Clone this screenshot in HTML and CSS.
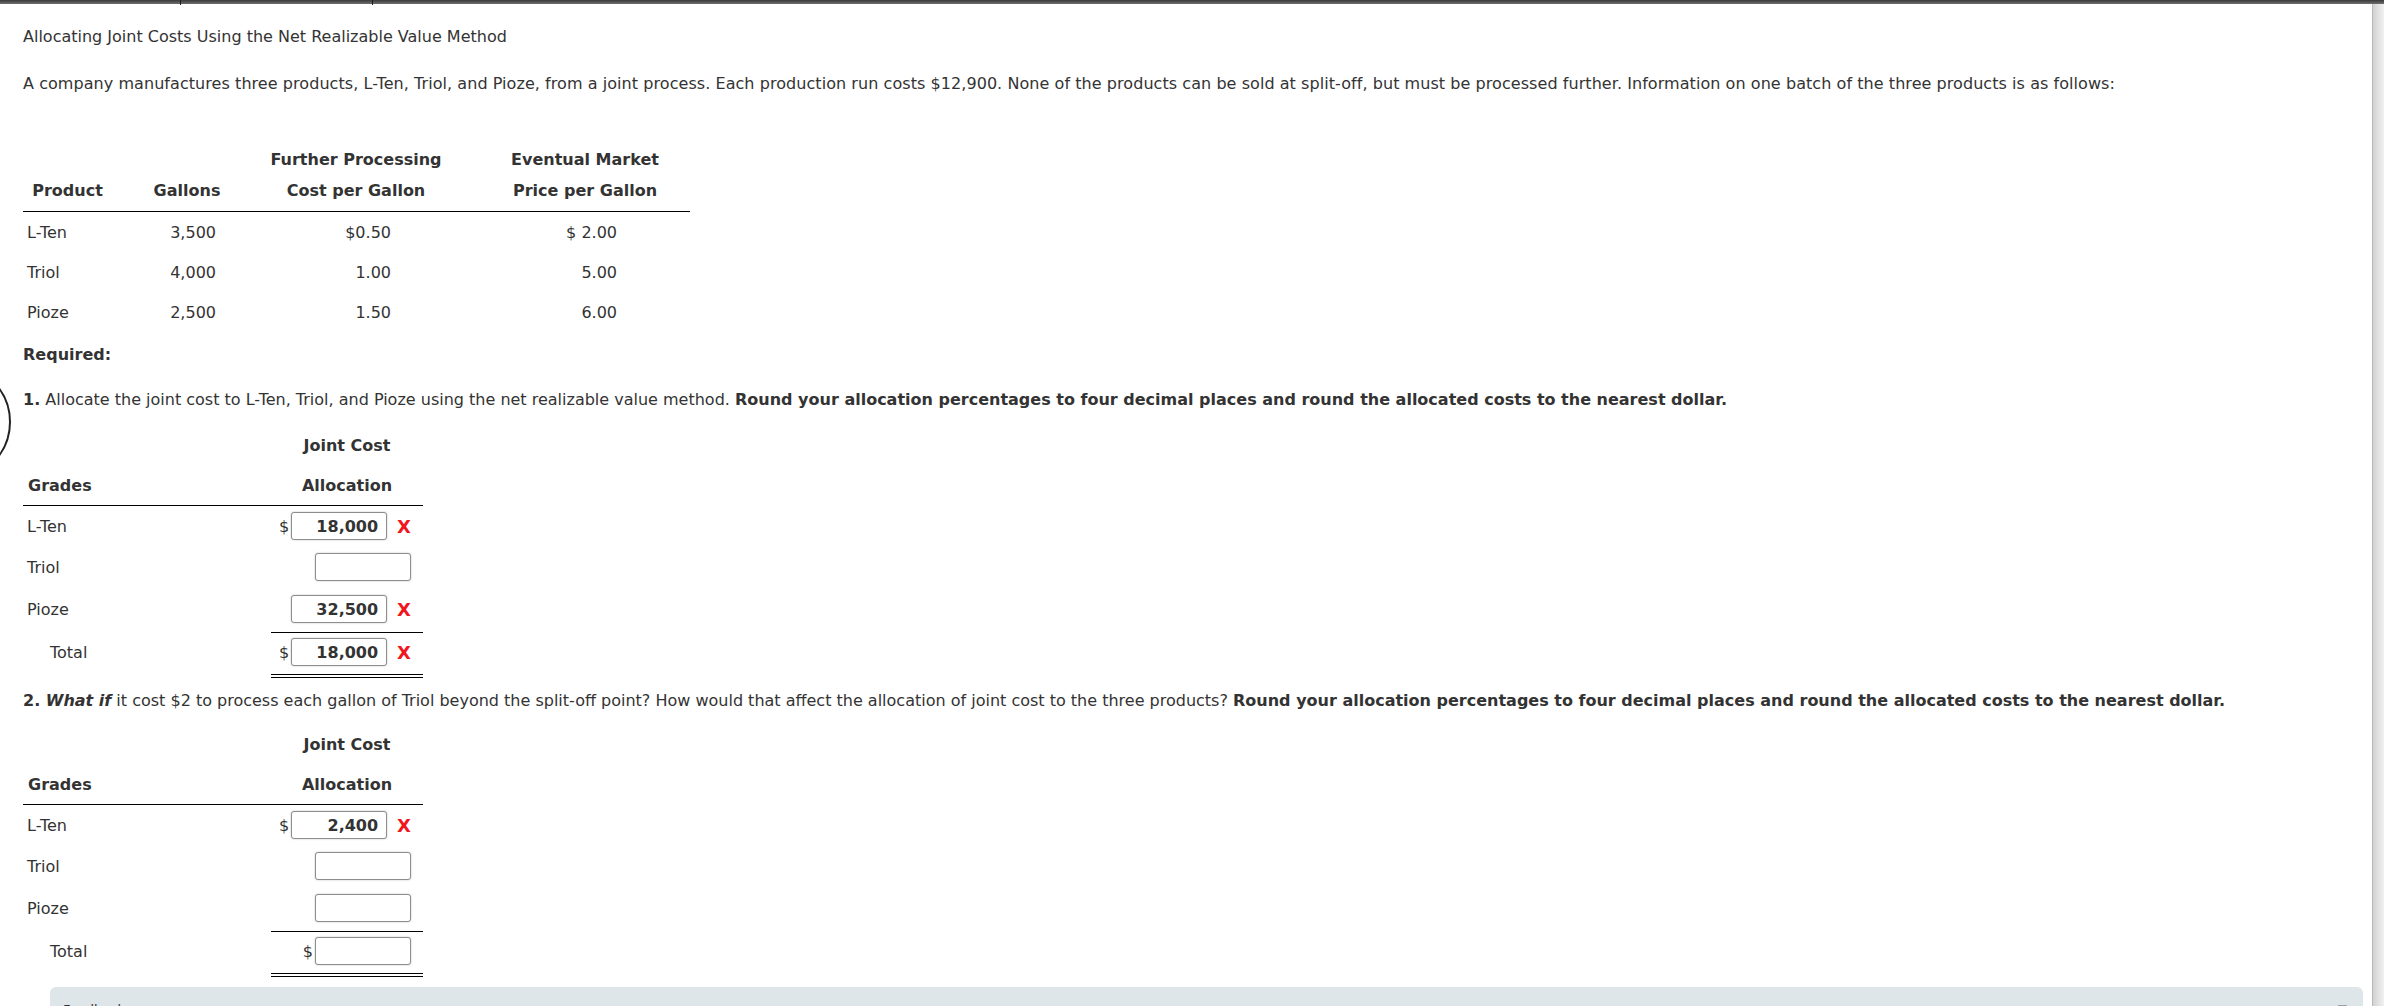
FILE: index.html
```html
<!DOCTYPE html>
<html lang="en">
<head>
    <meta charset="UTF-8">
    <meta name="viewport" content="width=device-width, initial-scale=1.0">
    <title>Allocating Joint Costs Using the Net Realizable Value Method</title>
    <link rel="stylesheet" href="styles.css">
</head>
<body>

    <div class="topbar">
        <div class="tab tab-first"></div>
        <div class="tab tab-second"></div>
        <div class="tab tab-rest"></div>
    </div>

    <div class="page">
        <div class="content">
            <p class="title">Allocating Joint Costs Using the Net Realizable Value Method</p>

            <p class="intro">A company manufactures three products, L-Ten, Triol, and Pioze, from a joint process. Each production run costs $12,900. None of the products can be sold at split-off, but must be processed further. Information on one batch of the three products is as follows:</p>

            <table class="products">
                <colgroup>
                    <col class="c-name">
                    <col class="c-gal">
                    <col class="c-cost">
                    <col class="c-price">
                </colgroup>
                <thead>
                    <tr class="head-top">
                        <th></th>
                        <th></th>
                        <th>Further Processing</th>
                        <th class="shift">Eventual Market</th>
                    </tr>
                    <tr class="head-bottom">
                        <th>Product</th>
                        <th>Gallons</th>
                        <th>Cost per Gallon</th>
                        <th class="shift">Price per Gallon</th>
                    </tr>
                </thead>
                <tbody>
                    <tr>
                        <td class="name">L-Ten</td>
                        <td class="gal">3,500</td>
                        <td class="cost">$0.50</td>
                        <td class="price">$ 2.00</td>
                    </tr>
                    <tr>
                        <td class="name">Triol</td>
                        <td class="gal">4,000</td>
                        <td class="cost">1.00</td>
                        <td class="price">5.00</td>
                    </tr>
                    <tr>
                        <td class="name">Pioze</td>
                        <td class="gal">2,500</td>
                        <td class="cost">1.50</td>
                        <td class="price">6.00</td>
                    </tr>
                </tbody>
            </table>

            <p class="required">Required:</p>

            <p class="question q-one"><b>1.</b> Allocate the joint cost to L-Ten, Triol, and Pioze using the net realizable value method. <b>Round your allocation percentages to four decimal places and round the allocated costs to the nearest dollar.</b></p>

            <table class="alloc alloc-one">
                <colgroup>
                    <col class="c-grade">
                    <col class="c-amount">
                </colgroup>
                <thead>
                    <tr class="head-top">
                        <th></th>
                        <th>Joint Cost</th>
                    </tr>
                    <tr class="head-bottom">
                        <th class="grade-head">Grades</th>
                        <th>Allocation</th>
                    </tr>
                </thead>
                <tbody>
                    <tr>
                        <td class="name">L-Ten</td>
                        <td class="amount"><span class="cell"><span class="cur">$</span><span class="answer">18,000</span><span class="wrong">X</span></span></td>
                    </tr>
                    <tr>
                        <td class="name">Triol</td>
                        <td class="amount"><span class="cell"><span class="answer"></span></span></td>
                    </tr>
                    <tr class="last">
                        <td class="name">Pioze</td>
                        <td class="amount"><span class="cell"><span class="answer">32,500</span><span class="wrong">X</span></span></td>
                    </tr>
                    <tr class="total">
                        <td class="name">Total</td>
                        <td class="amount"><span class="cell"><span class="cur">$</span><span class="answer">18,000</span><span class="wrong">X</span></span></td>
                    </tr>
                </tbody>
            </table>

            <p class="question q-two"><b>2. <i>What if</i></b> it cost $2 to process each gallon of Triol beyond the split-off point? How would that affect the allocation of joint cost to the three products? <b>Round your allocation percentages to four decimal places and round the allocated costs to the nearest dollar.</b></p>

            <table class="alloc alloc-two">
                <colgroup>
                    <col class="c-grade">
                    <col class="c-amount">
                </colgroup>
                <thead>
                    <tr class="head-top">
                        <th></th>
                        <th>Joint Cost</th>
                    </tr>
                    <tr class="head-bottom">
                        <th class="grade-head">Grades</th>
                        <th>Allocation</th>
                    </tr>
                </thead>
                <tbody>
                    <tr>
                        <td class="name">L-Ten</td>
                        <td class="amount"><span class="cell"><span class="cur">$</span><span class="answer">2,400</span><span class="wrong">X</span></span></td>
                    </tr>
                    <tr>
                        <td class="name">Triol</td>
                        <td class="amount"><span class="cell"><span class="answer"></span></span></td>
                    </tr>
                    <tr class="last">
                        <td class="name">Pioze</td>
                        <td class="amount"><span class="cell"><span class="answer"></span></span></td>
                    </tr>
                    <tr class="total">
                        <td class="name">Total</td>
                        <td class="amount"><span class="cell"><span class="cur">$</span><span class="answer"></span></span></td>
                    </tr>
                </tbody>
            </table>

            <div class="feedback">
                <span class="feedback-title">Feedback</span>
                <span class="feedback-toggle">&#9660;</span>
            </div>
        </div>
        <div class="scroll-track"></div>
    </div>

    <div class="nav-ring"></div>

</body>
</html>
```

FILE: styles.css
```css
body {
    margin: 0;
    font-family: "DejaVu Sans", Verdana, sans-serif;
    font-size: 16px;
    line-height: 19px;
    color: #333;
    background-color: #fff;
    overflow: hidden;
}

p {
    margin: 0;
}

/* dark strip at the very top */
.topbar {
    display: flex;
    height: 4px;
    background: linear-gradient(#3a3a3a, #6e6e6e);
}

.tab {
    height: 5px;
    border-right: 1px solid #1e1e1e;
}

.tab-first {
    width: 180px;
}

.tab-second {
    width: 191px;
}

.tab-rest {
    flex: 1;
    border-right: none;
}

.page {
    display: flex;
    height: 1002px;
}

.content {
    flex: 1;
    padding-left: 23px;
}

.scroll-track {
    width: 11px;
    border-left: 1px solid #b9b9b9;
    background: linear-gradient(to right, #d2d2d2, #f1f1f1);
}

.title {
    margin-top: 23px;
}

.intro {
    margin-top: 28px;
    white-space: nowrap;
    letter-spacing: 0.06px;
}

table {
    border-collapse: separate;
    border-spacing: 0;
    table-layout: fixed;
}

th {
    font-weight: bold;
    text-align: center;
    padding: 0;
}

td {
    padding: 0;
}

.head-bottom th {
    border-bottom: 1px solid #000;
}

/* product table */
.products {
    margin-top: 51px;
    width: 667px;
}

.c-name { width: 89px; }
.c-gal { width: 150px; }
.c-cost { width: 188px; }
.c-price { width: 240px; }

.products .head-top th {
    padding-top: 6px;
    padding-bottom: 6px;
}

.products .head-bottom th {
    padding-top: 6px;
    padding-bottom: 11px;
}

.products th.shift {
    padding-left: 30px;
}

.products td {
    padding-top: 11px;
    padding-bottom: 10px;
}

.products .name {
    padding-left: 4px;
}

.products .gal {
    text-align: right;
    padding-right: 46px;
}

.products .cost {
    text-align: right;
    padding-right: 59px;
}

.products .price {
    text-align: right;
    padding-right: 73px;
}

.required {
    margin-top: 13px;
    font-weight: bold;
}

.question {
    white-space: nowrap;
}

.q-one {
    margin-top: 26px;
}

.q-two {
    margin-top: 13px;
}

/* allocation tables */
.alloc {
    width: 400px;
}

.alloc-one {
    margin-top: 20px;
}

.alloc-two {
    margin-top: 18px;
}

.c-grade { width: 248px; }
.c-amount { width: 152px; }

.alloc .head-top th {
    padding-top: 7px;
    padding-bottom: 10px;
}

.alloc .head-bottom th {
    padding-top: 11px;
    padding-bottom: 10px;
}

.alloc th.grade-head {
    text-align: left;
    padding-left: 5px;
}

.alloc td {
    padding-top: 6px;
    padding-bottom: 7px;
    vertical-align: middle;
}

.alloc .last td {
    padding-top: 7px;
    padding-bottom: 9px;
}

.alloc .name {
    padding-left: 4px;
}

.alloc .amount {
    text-align: right;
    padding-right: 12px;
}

.alloc .total td {
    border-top: 1px solid transparent;
    border-bottom: 4px solid transparent;
    padding-top: 5px;
    padding-bottom: 8px;
}

.alloc .total .name {
    padding-left: 27px;
}

.alloc .total .amount {
    border-top-color: #000;
    border-bottom: 4px double #000;
}

.cell {
    display: inline-flex;
    align-items: center;
    vertical-align: middle;
}

.cur {
    margin-right: 2px;
}

.answer {
    display: inline-block;
    box-sizing: border-box;
    width: 96px;
    height: 28px;
    padding: 4px 8px 0 4px;
    border: 1px solid #8d8d8d;
    border-radius: 3px;
    box-shadow: 0 0 2px rgba(0, 0, 0, 0.25);
    background-color: #fff;
    font-weight: bold;
    text-align: right;
}

.wrong {
    margin-left: 10px;
    color: #f0161b;
    font-weight: bold;
    font-size: 18px;
    line-height: 19px;
}

/* feedback panel, cut by the bottom edge */
.feedback {
    display: flex;
    justify-content: space-between;
    margin: 10px 9px 0 27px;
    height: 60px;
    padding: 13px 16px 0 13px;
    background-color: #dfe6e9;
    border-radius: 6px;
    font-size: 13px;
}

.feedback-toggle {
    color: #8a9094;
    font-size: 12px;
}

/* ring peeking in from the left edge */
.nav-ring {
    position: absolute;
    left: -105px;
    top: 364px;
    width: 116px;
    height: 116px;
    box-sizing: border-box;
    border: 2px solid #222;
    border-radius: 50%;
}
```
